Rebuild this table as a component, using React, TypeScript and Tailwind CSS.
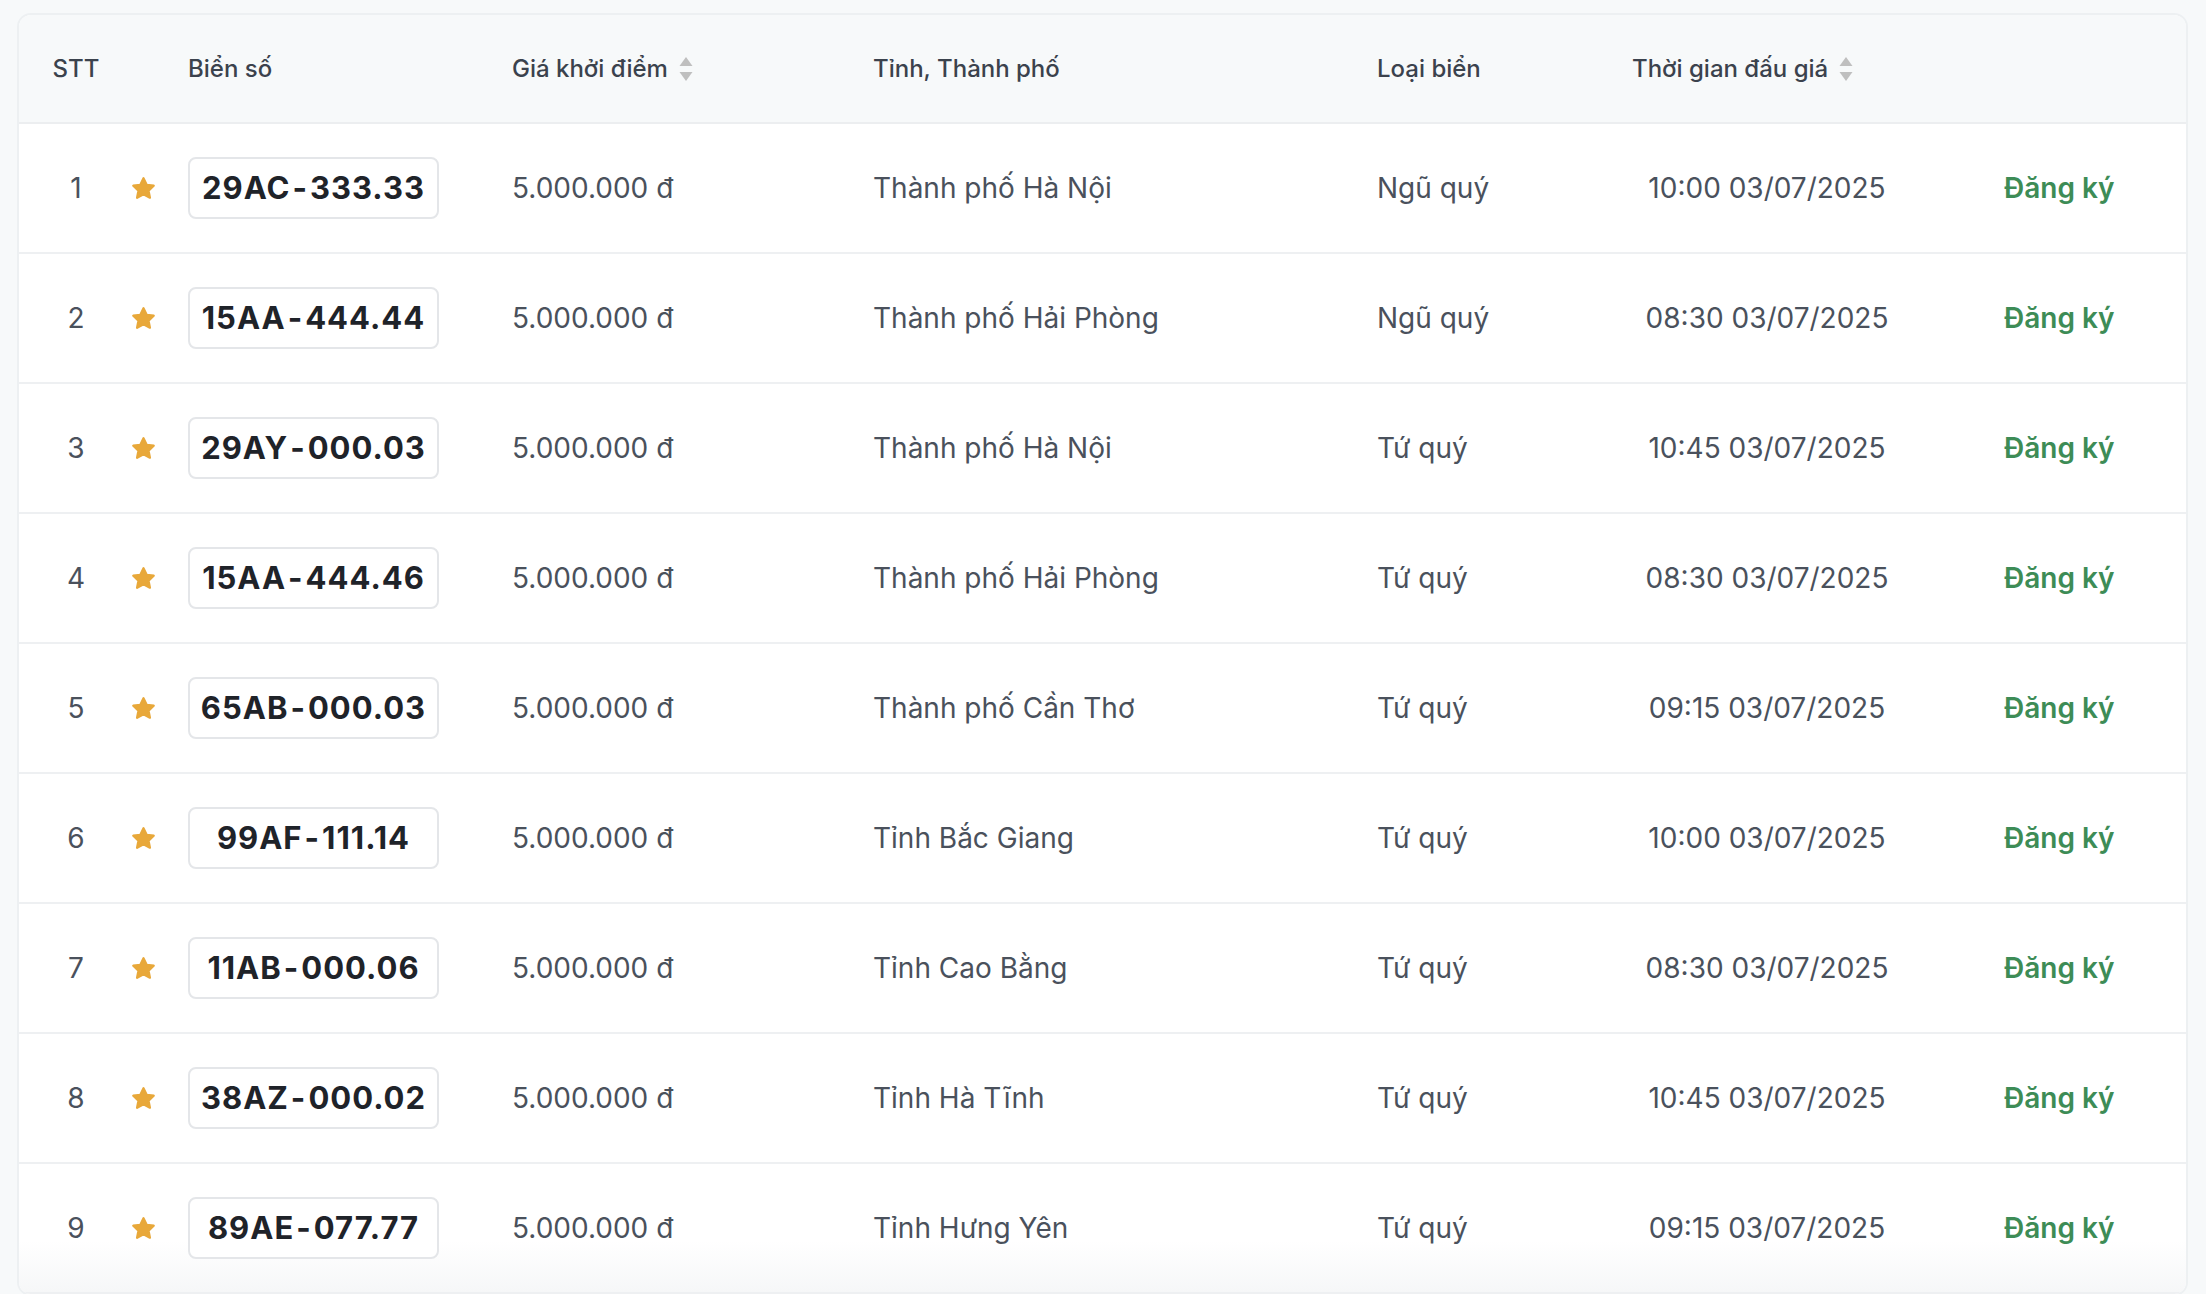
import React from "react";

type Plate = {
  id: number;
  plate: string;
  price: string;
  province: string;
  kind: string;
  time: string;
};

const plates: Plate[] = [
  { id: 1, plate: "29AC-333.33", price: "5.000.000 đ", province: "Thành phố Hà Nội", kind: "Ngũ quý", time: "10:00 03/07/2025" },
  { id: 2, plate: "15AA-444.44", price: "5.000.000 đ", province: "Thành phố Hải Phòng", kind: "Ngũ quý", time: "08:30 03/07/2025" },
  { id: 3, plate: "29AY-000.03", price: "5.000.000 đ", province: "Thành phố Hà Nội", kind: "Tứ quý", time: "10:45 03/07/2025" },
  { id: 4, plate: "15AA-444.46", price: "5.000.000 đ", province: "Thành phố Hải Phòng", kind: "Tứ quý", time: "08:30 03/07/2025" },
  { id: 5, plate: "65AB-000.03", price: "5.000.000 đ", province: "Thành phố Cần Thơ", kind: "Tứ quý", time: "09:15 03/07/2025" },
  { id: 6, plate: "99AF-111.14", price: "5.000.000 đ", province: "Tỉnh Bắc Giang", kind: "Tứ quý", time: "10:00 03/07/2025" },
  { id: 7, plate: "11AB-000.06", price: "5.000.000 đ", province: "Tỉnh Cao Bằng", kind: "Tứ quý", time: "08:30 03/07/2025" },
  { id: 8, plate: "38AZ-000.02", price: "5.000.000 đ", province: "Tỉnh Hà Tĩnh", kind: "Tứ quý", time: "10:45 03/07/2025" },
  { id: 9, plate: "89AE-077.77", price: "5.000.000 đ", province: "Tỉnh Hưng Yên", kind: "Tứ quý", time: "09:15 03/07/2025" },
];

function SortIcon() {
  return (
    <svg width="16" height="28" viewBox="0 0 16 28" className="ml-[10px]">
      <path d="M8 2 L14.5 11 H1.5 Z" fill="#bfbfbf" />
      <path d="M8 26 L14.5 17 H1.5 Z" fill="#bfbfbf" />
    </svg>
  );
}

function Star() {
  return (
    <svg width="27" height="27" viewBox="0 0 24 24" className="shrink-0">
      <path
        d="M12 2.8l2.8 5.9 6.3.8-4.6 4.4 1.2 6.3L12 17.1l-5.7 3.1 1.2-6.3L2.9 9.5l6.3-.8z"
        fill="#e8a83a"
        stroke="#e8a83a"
        strokeWidth="2"
        strokeLinejoin="round"
      />
    </svg>
  );
}

function PlateText({ value }: { value: string }) {
  const [left, right] = value.split("-");
  return (
    <span>
      {left}
      <span className="mx-[2px]">-</span>
      {right}
    </span>
  );
}

export default function App() {
  return (
    <div
      className="min-h-screen bg-[#f7f9fa] pt-[13px] pl-[17px] pr-[18px]"
      style={{ fontFamily: "Inter, 'Noto Sans', sans-serif" }}
    >
      <div className="overflow-hidden rounded-[14px] border-2 border-[#edf0f2] bg-white">
        <div className="flex h-[109px] items-center border-b-2 border-[#eceef0] bg-[#f7f9fa] text-[24px] font-medium text-[#3b424d]">
          <div className="w-[114px] text-center">STT</div>
          <div className="w-[20px]" />
          <div className="ml-[35px] w-[251px]">Biển số</div>
          <div className="ml-[73px] flex w-[361px] items-center">
            Giá khởi điểm
            <SortIcon />
          </div>
          <div className="w-[504px]">Tỉnh, Thành phố</div>
          <div className="w-[255px]">Loại biển</div>
          <div className="flex w-[270px] items-center">
            Thời gian đấu giá
            <SortIcon />
          </div>
          <div className="flex-1" />
        </div>

        {plates.map((p, i) => (
          <div
            key={p.id}
            className={
              i === plates.length - 1
                ? "flex h-[130px] items-center border-b-2 border-[#eef0f2] bg-gradient-to-b from-white from-60% to-[#f6f7f8] text-[28px] text-[#4a515c]"
                : "flex h-[130px] items-center border-b-2 border-[#eef0f2] text-[28px] text-[#4a515c]"
            }
          >
            <div className="w-[114px] text-center">{p.id}</div>
            <div className="flex w-[20px] justify-center">
              <Star />
            </div>
            <div className="ml-[35px] flex h-[62px] w-[251px] items-center justify-center rounded-[8px] border-2 border-[#e4e6e9] bg-white text-[31px] font-bold tracking-[1px] text-[#1f2329]">
              <PlateText value={p.plate} />
            </div>
            <div className="ml-[73px] w-[361px]">{p.price}</div>
            <div className="w-[504px]">{p.province}</div>
            <div className="w-[255px]">{p.kind}</div>
            <div className="w-[270px] text-center">{p.time}</div>
            <div className="flex-1 pl-[102px] font-semibold text-[#3d8c56]">
              Đăng ký
            </div>
          </div>
        ))}
      </div>
    </div>
  );
}
